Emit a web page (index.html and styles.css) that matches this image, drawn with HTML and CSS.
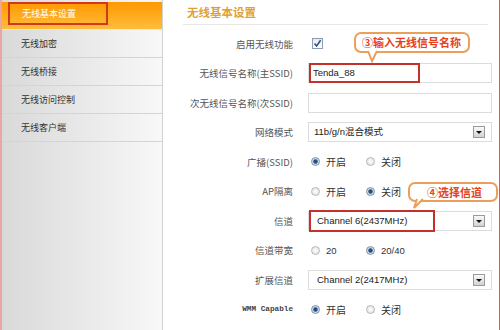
FILE: index.html
```html
<!DOCTYPE html>
<html lang="zh-CN">
<head>
    <meta charset="UTF-8">
    <title>无线基本设置</title>
    <link rel="stylesheet" href="styles.css">
</head>
<body>
    <div class="page">
        <div class="sidebar">
            <ul class="menu">
                <li class="active"><span class="mark">无线基本设置</span></li>
                <li>无线加密</li>
                <li>无线桥接</li>
                <li>无线访问控制</li>
                <li>无线客户端</li>
            </ul>
        </div>

        <div class="main">
            <h2 class="title">无线基本设置</h2>

            <div class="form">
                <div class="lbl">启用无线功能</div>
                <div class="ctl">
                    <span class="check"><svg width="9" height="9" viewBox="0 0 9 9"><path d="M1.5 4.5 L3.6 7 L7.6 1.2" fill="none" stroke="#2d4f7c" stroke-width="1.5"/></svg></span>
                </div>

                <div class="lbl">无线信号名称(主SSID)</div>
                <div class="ctl">
                    <div class="field">Tenda_88<span class="hl hl-ssid"></span></div>
                </div>

                <div class="lbl">次无线信号名称(次SSID)</div>
                <div class="ctl">
                    <div class="field"></div>
                </div>

                <div class="lbl">网络模式</div>
                <div class="ctl">
                    <div class="field select">11b/g/n混合模式<span class="arrow"></span></div>
                </div>

                <div class="lbl">广播(SSID)</div>
                <div class="ctl">
                    <span class="opt"><span class="radio on"></span>开启</span>
                    <span class="opt"><span class="radio"></span>关闭</span>
                </div>

                <div class="lbl">AP隔离</div>
                <div class="ctl">
                    <span class="opt"><span class="radio"></span>开启</span>
                    <span class="opt"><span class="radio on"></span>关闭</span>
                </div>

                <div class="lbl">信道</div>
                <div class="ctl">
                    <div class="field select chan">Channel 6(2437MHz)<span class="arrow"></span><span class="hl hl-chan"></span></div>
                </div>

                <div class="lbl">信道带宽</div>
                <div class="ctl">
                    <span class="opt num"><span class="radio"></span>20</span>
                    <span class="opt num"><span class="radio on"></span>20/40</span>
                </div>

                <div class="lbl">扩展信道</div>
                <div class="ctl">
                    <div class="field select chan">Channel 2(2417MHz)<span class="arrow"></span></div>
                </div>

                <div class="lbl mono">WMM Capable</div>
                <div class="ctl">
                    <span class="opt"><span class="radio on"></span>开启</span>
                    <span class="opt"><span class="radio"></span>关闭</span>
                </div>
            </div>

            <!-- 提示气泡 -->
            <div class="tip tip-ssid">③输入无线信号名称<svg class="tail" width="30" height="30"><path d="M12 17 L16 27 L21 17" fill="#fff" stroke="#eb9f5b" stroke-width="2"/></svg></div>
            <div class="tip tip-chan">④选择信道<svg class="tail" width="30" height="30"><path d="M7 15 L4 24 L13 15" fill="#fff" stroke="#eb9f5b" stroke-width="2"/></svg></div>
        </div>
    </div>
</body>
</html>
```

FILE: styles.css
```css
body {
    margin: 0;
    font-family: "Noto Sans CJK SC", sans-serif;
    background: #fff;
}
.page {
    display: flex;
    width: 500px;
    height: 330px;
    box-sizing: border-box;
    border-left: 2px solid #eaa5a5;
    border-right: 1px solid #cf5b5b;
    overflow: hidden;
}
.sidebar {
    flex: none;
    width: 160px;
    border-right: 1px solid #d2d2d2;
    background: linear-gradient(to right, #d9d9d9, #f8f8f8);
}
.menu {
    list-style: none;
    margin: 0;
    padding: 0;
}
.menu li {
    height: 27px;
    line-height: 27px;
    padding-left: 19px;
    font-size: 9px;
    color: #333;
    border-bottom: 1px solid #d4d4d4;
}
.menu li.active {
    padding-left: 6px;
    color: #fff;
    background: linear-gradient(#ff9800, #ffbd3c);
    border-bottom-color: #e8e8e8;
}
.mark {
    display: block;
    width: 84px;
    height: 19px;
    margin-top: 2px;
    padding-left: 12px;
    line-height: 19px;
    border: 2px solid #d2381c;
}
.main {
    flex: 1;
    position: relative;
    padding: 0 7px 0 20px;
}
.title {
    margin: 0 4px 0 0;
    height: 24px;
    line-height: 25px;
    padding-left: 4px;
    font-size: 11.5px;
    font-weight: bold;
    color: #dfa136;
    border-bottom: 1px solid #e8e8e8;
}
.form {
    display: grid;
    grid-template-columns: 110px 184px;
    grid-auto-rows: 29.5px;
    column-gap: 15px;
    align-items: center;
    padding-top: 4px;
}
.lbl {
    text-align: right;
    font-size: 9.5px;
    color: #555;
    white-space: nowrap;
}
.lbl.mono {
    font-family: "Liberation Mono", monospace;
    font-size: 7.7px;
    font-weight: bold;
    color: #444;
}
.ctl {
    display: flex;
    align-items: center;
}
.check {
    display: block;
    width: 9px;
    height: 9px;
    margin-left: 4px;
    border: 1px solid #8e9db3;
    background: linear-gradient(#e6ebf2, #fff);
}
.check svg {
    display: block;
}
.field {
    position: relative;
    width: 184px;
    height: 20px;
    box-sizing: border-box;
    padding-left: 4px;
    border: 1px solid #dcdcdc;
    font-family: "Liberation Sans", Arial, "Noto Sans CJK SC", sans-serif;
    font-size: 9.5px;
    line-height: 18px;
    color: #222;
}
.select {
    padding-left: 5px;
}
.select.chan {
    padding-left: 8px;
}
.arrow {
    position: absolute;
    right: 6px;
    top: 3px;
    width: 10px;
    height: 10px;
    border: 1px solid #9a9a9a;
    background: linear-gradient(#fafafa, #d2d2d2);
}
.arrow::after {
    content: "";
    position: absolute;
    left: 2px;
    top: 4px;
    border-left: 3px solid transparent;
    border-right: 3px solid transparent;
    border-top: 3px solid #111;
}
.hl {
    position: absolute;
    top: -1px;
    bottom: -1px;
    left: 0;
    border: 2px solid #c5302b;
}
.hl-ssid {
    width: 107px;
}
.hl-chan {
    top: -2px;
    bottom: -2px;
    width: 122px;
}
.opt {
    display: inline-flex;
    align-items: center;
    width: 55px;
    font-size: 10px;
    color: #333;
}
.opt.num {
    font-family: "Liberation Sans", Arial, sans-serif;
    font-size: 9.5px;
}
.radio {
    width: 7px;
    height: 7px;
    margin: 0 6px 0 3px;
    border: 1px solid #b4b8c0;
    border-radius: 50%;
    background: radial-gradient(circle, #fff, #dcdcdc);
}
.radio.on {
    border-color: #7d93ad;
    background: radial-gradient(circle, #264f80 0, #264f80 1.8px, #cfdbe8 2.6px);
}
.tip {
    position: absolute;
    box-sizing: border-box;
    height: 21px;
    border: 2px solid #eb9f5b;
    border-radius: 7px;
    background: #fff;
    color: #e5421b;
    font-size: 11px;
    font-weight: bold;
    line-height: 17px;
    white-space: nowrap;
}
.tip-ssid {
    left: 191px;
    top: 32px;
    width: 116px;
    padding-left: 6px;
}
.tip-chan {
    left: 245px;
    top: 182px;
    width: 90px;
    height: 20px;
    line-height: 16px;
    padding-left: 17px;
}
.tail {
    position: absolute;
    left: 0;
    top: 0;
    overflow: visible;
}
```
